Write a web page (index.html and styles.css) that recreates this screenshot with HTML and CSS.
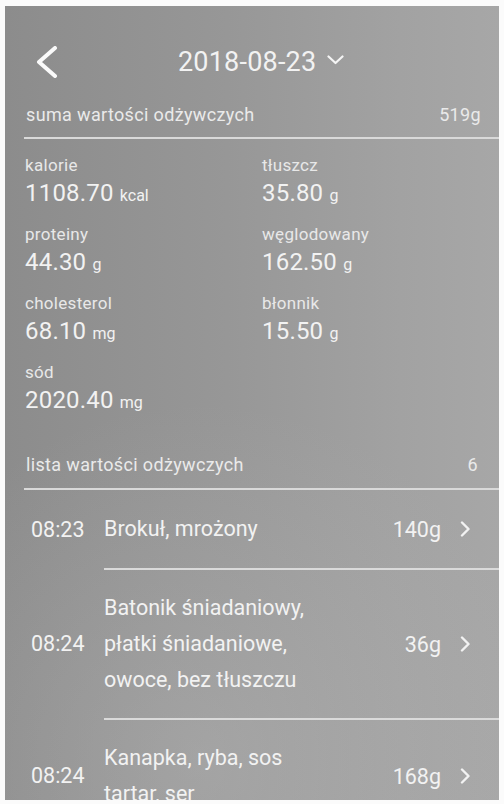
FILE: index.html
```html
<!DOCTYPE html>
<html lang="pl">
<head>
<meta charset="utf-8">
<title>2018-08-23</title>
<link rel="stylesheet" href="styles.css">
</head>
<body>
<div class="screen">
  <header class="topbar">
    <svg class="back" width="24" height="32" viewBox="0 0 24 32"><path d="M19 2 L3 16 L19 30" fill="none" stroke="#fafafa" stroke-width="4" stroke-linecap="round" stroke-linejoin="round"/></svg>
    <div class="title">
      <span class="date">2018-08-23</span>
      <svg class="down" width="17" height="10" viewBox="0 0 17 10"><path d="M1.5 1.5 L8.5 8 L15.5 1.5" fill="none" stroke="#f5f5f5" stroke-width="2.2" stroke-linecap="round" stroke-linejoin="round"/></svg>
    </div>
  </header>

  <section class="sum">
    <div class="sec-head"><span>suma wartości odżywczych</span><span>519g</span></div>
    <div class="grid">
      <div class="cell"><div class="label">kalorie</div><div class="value">1108.70 <span class="unit">kcal</span></div></div>
      <div class="cell"><div class="label">tłuszcz</div><div class="value">35.80 <span class="unit">g</span></div></div>
      <div class="cell"><div class="label">proteiny</div><div class="value">44.30 <span class="unit">g</span></div></div>
      <div class="cell"><div class="label">węglodowany</div><div class="value">162.50 <span class="unit">g</span></div></div>
      <div class="cell"><div class="label">cholesterol</div><div class="value">68.10 <span class="unit">mg</span></div></div>
      <div class="cell"><div class="label">błonnik</div><div class="value">15.50 <span class="unit">g</span></div></div>
      <div class="cell"><div class="label">sód</div><div class="value">2020.40 <span class="unit">mg</span></div></div>
    </div>
  </section>

  <section class="list">
    <div class="sec-head list-head"><span>lista wartości odżywczych</span><span>6</span></div>
    <div class="items">
      <div class="item">
        <div class="time">08:23</div>
        <div class="body">
          <div class="name">Brokuł, mrożony</div>
          <div class="weight">140g</div>
          <svg class="chev" width="11" height="16" viewBox="0 0 11 16"><path d="M2 1.5 L8.5 8 L2 14.5" fill="none" stroke="#f2f2f2" stroke-width="2.4" stroke-linecap="round" stroke-linejoin="round"/></svg>
        </div>
      </div>
      <div class="item">
        <div class="time">08:24</div>
        <div class="body">
          <div class="name">Batonik śniadaniowy, płatki śniadaniowe, owoce, bez tłuszczu</div>
          <div class="weight">36g</div>
          <svg class="chev" width="11" height="16" viewBox="0 0 11 16"><path d="M2 1.5 L8.5 8 L2 14.5" fill="none" stroke="#f2f2f2" stroke-width="2.4" stroke-linecap="round" stroke-linejoin="round"/></svg>
        </div>
      </div>
      <div class="item">
        <div class="time">08:24</div>
        <div class="body">
          <div class="name">Kanapka, ryba, sos tartar, ser</div>
          <div class="weight">168g</div>
          <svg class="chev" width="11" height="16" viewBox="0 0 11 16"><path d="M2 1.5 L8.5 8 L2 14.5" fill="none" stroke="#f2f2f2" stroke-width="2.4" stroke-linecap="round" stroke-linejoin="round"/></svg>
        </div>
      </div>
    </div>
  </section>
</div>
</body>
</html>
```

FILE: styles.css
```css
html, body {
  margin: 0;
  padding: 0;
  background: #fbfbfb;
}
body {
  width: 504px;
  height: 804px;
  overflow: hidden;
  font-family: Roboto, "Noto Sans", "Liberation Sans", sans-serif;
  color: #f2f2f2;
}
.screen {
  margin: 6px 5px 0 5px;
  width: 494px;
  height: 794px;
  overflow: hidden;
  background:
    radial-gradient(ellipse 70% 45% at 40% 95%, rgba(190,190,190,0.35), rgba(190,190,190,0) 100%),
    linear-gradient(to right, #8c8c8c 0%, #979797 45%, #a2a2a2 80%, #a7a7a7 100%);
}
.topbar {
  display: flex;
  align-items: center;
  height: 40px;
  padding: 36px 0 0 31px;
}
.back {
  display: block;
}
.title {
  display: flex;
  align-items: center;
  margin-left: 118px;
}
.date {
  font-size: 27px;
  line-height: 40px;
  letter-spacing: 0.2px;
}
.down {
  display: block;
  margin-left: 11px;
  margin-top: -4px;
}
.sum {
  margin-top: 21px;
}
.sec-head {
  display: flex;
  justify-content: space-between;
  font-size: 18px;
  line-height: 24px;
  letter-spacing: 0.35px;
  color: #eaeaea;
}
.sum .sec-head {
  padding: 0 18px 10px 2px;
  border-bottom: 2px solid #d9d9d9;
  margin-left: 19px;
}
.grid {
  display: grid;
  grid-template-columns: 237px 237px;
  row-gap: 13px;
  padding: 15px 0 0 20px;
}
.label {
  font-size: 17px;
  line-height: 22px;
  letter-spacing: 0.3px;
  color: #e8e8e8;
}
.value {
  font-size: 24px;
  line-height: 34px;
  letter-spacing: 0.2px;
}
.unit {
  font-size: 16px;
  line-height: 1;
  letter-spacing: 0;
}
.list {
  margin-top: 36px;
}
.list-head {
  margin-left: 19px;
  padding: 0 21px 11px 2px;
  border-bottom: 2px solid #d9d9d9;
}
.item {
  display: flex;
}
.time {
  width: 73px;
  padding-left: 26px;
  font-size: 21.5px;
  display: flex;
  align-items: center;
}
.body {
  flex: 1;
  display: flex;
  align-items: center;
  padding: 21px 28px 21px 0;
}
.item + .item .body {
  border-top: 2px solid #dadada;
  padding-top: 20px;
  padding-bottom: 20px;
}
.name {
  width: 218px;
  font-size: 21.5px;
  line-height: 36px;
}
.weight {
  flex: 1;
  text-align: right;
  font-size: 21.5px;
  margin-right: 19px;
}
.chev {
  display: block;
}
```
